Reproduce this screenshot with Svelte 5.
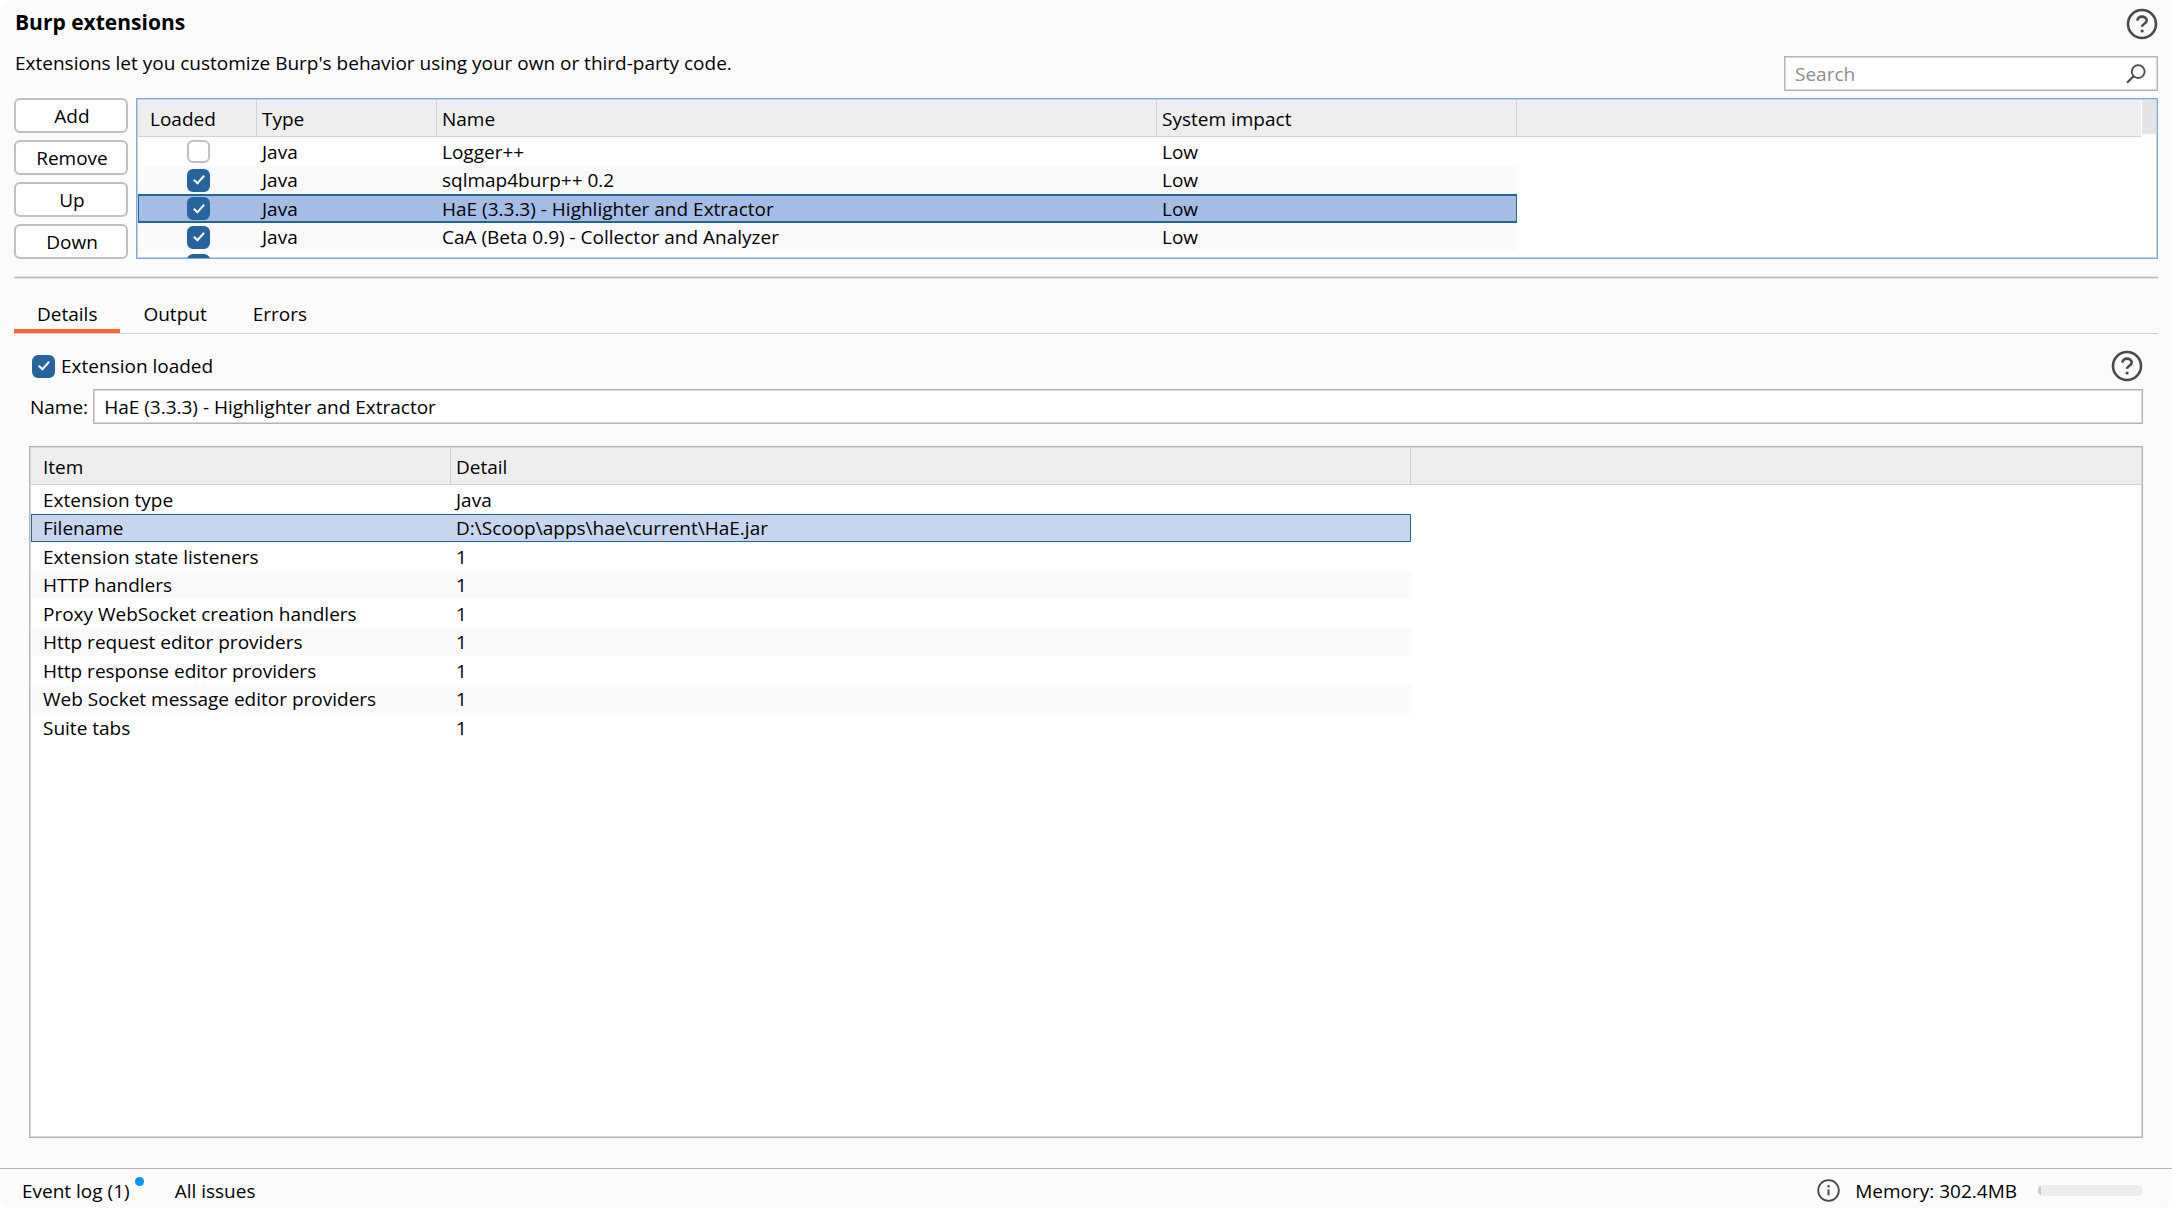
<script lang="ts">
	type Extension = { loaded: boolean; type: string; name: string; impact: string };

	let extensions = $state<Extension[]>([
		{ loaded: false, type: 'Java', name: 'Logger++', impact: 'Low' },
		{ loaded: true, type: 'Java', name: 'sqlmap4burp++ 0.2', impact: 'Low' },
		{ loaded: true, type: 'Java', name: 'HaE (3.3.3) - Highlighter and Extractor', impact: 'Low' },
		{ loaded: true, type: 'Java', name: 'CaA (Beta 0.9) - Collector and Analyzer', impact: 'Low' },
		{ loaded: true, type: '', name: '', impact: '' }
	]);

	const details = [
		{ item: 'Extension type', detail: 'Java' },
		{ item: 'Filename', detail: 'D:\\Scoop\\apps\\hae\\current\\HaE.jar' },
		{ item: 'Extension state listeners', detail: '1' },
		{ item: 'HTTP handlers', detail: '1' },
		{ item: 'Proxy WebSocket creation handlers', detail: '1' },
		{ item: 'Http request editor providers', detail: '1' },
		{ item: 'Http response editor providers', detail: '1' },
		{ item: 'Web Socket message editor providers', detail: '1' },
		{ item: 'Suite tabs', detail: '1' }
	];

	const actions = ['Add', 'Remove', 'Up', 'Down'];
	const tabs = ['Details', 'Output', 'Errors'];

	let selected = $state(2);
	let selectedDetail = $state(1);
	let activeTab = $state('Details');
	let search = $state('');
	const memoryUsed = 3;
</script>

{#snippet helpIcon()}
	<svg width="32" height="32" viewBox="0 0 32 32" fill="none" stroke="#4a4a4a">
		<circle cx="16" cy="16" r="14" stroke-width="2.6" />
		<path d="M11.4 12.6c.1-2.3 2-4 4.6-4s4.7 1.6 4.7 3.9c0 3.2-4.6 3.2-4.6 6.3" stroke-width="2.6" />
		<circle cx="16.1" cy="23" r="1.6" fill="#4a4a4a" stroke="none" />
	</svg>
{/snippet}

<div class="window">
	<main>
		<header class="page-header">
			<div class="intro">
				<h1>Burp extensions</h1>
				<p>Extensions let you customize Burp's behavior using your own or third-party code.</p>
			</div>
			<div class="header-tools">
				<button class="icon-btn" aria-label="Help">{@render helpIcon()}</button>
				<label class="search field">
					<input type="text" placeholder="Search" aria-label="Search" bind:value={search} />
					<svg width="22" height="22" viewBox="0 0 22 22" fill="none" stroke="#4a4a4a" stroke-width="1.8">
						<circle cx="13.2" cy="8.6" r="6.4" />
						<path d="M8.6 13.2L2 19.8" stroke-width="2.2" />
					</svg>
				</label>
			</div>
		</header>

		<section class="extensions">
			<div class="actions">
				{#each actions as action (action)}
					<button class="btn">{action}</button>
				{/each}
			</div>
			<div class="pane focused">
				<table>
					<colgroup>
						<col class="col-loaded" />
						<col class="col-type" />
						<col class="col-name" />
						<col class="col-impact" />
						<col />
					</colgroup>
					<thead>
						<tr>
							<th>Loaded</th>
							<th>Type</th>
							<th>Name</th>
							<th>System impact</th>
							<th></th>
						</tr>
					</thead>
					<tbody>
						{#each extensions as ext, i (i)}
							<tr class:selected={i === selected} onclick={() => (selected = i)}>
								<td class="check">
									<input type="checkbox" aria-label="Loaded" bind:checked={ext.loaded} />
								</td>
								<td>{ext.type}</td>
								<td>{ext.name}</td>
								<td>{ext.impact}</td>
								<td></td>
							</tr>
						{/each}
					</tbody>
				</table>
				<div class="scrollbar"><div class="thumb"></div></div>
			</div>
		</section>

		<hr />

		<div class="tabs" role="tablist">
			{#each tabs as tab (tab)}
				<button
					class="tab"
					class:active={tab === activeTab}
					role="tab"
					aria-selected={tab === activeTab}
					onclick={() => (activeTab = tab)}
				>{tab}</button>
			{/each}
		</div>

		<section class="panel">
			<div class="loaded-row">
				<label class="loaded">
					<input type="checkbox" checked />
					Extension loaded
				</label>
				<button class="icon-btn" aria-label="Help">{@render helpIcon()}</button>
			</div>
			<div class="name-row">
				<label for="ext-name">Name:</label>
				<div class="field">
					<input id="ext-name" type="text" value="HaE (3.3.3) - Highlighter and Extractor" />
				</div>
			</div>
			<div class="pane details">
				<table>
					<colgroup>
						<col class="col-item" />
						<col class="col-detail" />
						<col />
					</colgroup>
					<thead>
						<tr>
							<th>Item</th>
							<th>Detail</th>
							<th></th>
						</tr>
					</thead>
					<tbody>
						{#each details as row, i (row.item)}
							<tr class:selected={i === selectedDetail} onclick={() => (selectedDetail = i)}>
								<td>{row.item}</td>
								<td>{row.detail}</td>
								<td></td>
							</tr>
						{/each}
					</tbody>
				</table>
			</div>
		</section>
	</main>

	<footer>
		<button class="status-btn event-log">Event log (1)<span class="dot"></span></button>
		<button class="status-btn">All issues</button>
		<div class="memory">
			<svg width="23" height="23" viewBox="0 0 23 23" fill="none" stroke="#4a4a4a">
				<circle cx="11.5" cy="11.5" r="10.3" stroke-width="1.8" />
				<path d="M11.5 10.4v6" stroke-width="2" />
				<circle cx="11.5" cy="7.3" r="1.2" fill="#4a4a4a" stroke="none" />
			</svg>
			<span>Memory: 302.4MB</span>
			<div class="meter"><div class="used" style="width: {memoryUsed}%"></div></div>
		</div>
	</footer>
</div>

<style>
	:global(body) {
		background: #fff;
	}

	.window {
		min-height: 100vh;
		box-sizing: border-box;
		display: flex;
		flex-direction: column;
		background: #fbfbfb;
		border-radius: 12px;
		color: #000;
		font-family: 'Open Sans', 'Noto Sans', sans-serif;
		font-size: 19px;
		line-height: 28px;
	}

	main {
		flex: 1;
		display: flex;
		flex-direction: column;
		padding: 8px 14px 0 14px;
	}

	button,
	input {
		font: inherit;
		color: inherit;
		margin: 0;
	}

	svg {
		display: block;
		flex-shrink: 0;
	}

	.page-header {
		display: flex;
		justify-content: space-between;
		margin-bottom: 7px;
		padding-left: 1px;
	}

	h1 {
		margin: 0 0 13px;
		font-size: 21px;
		font-weight: 700;
	}

	p {
		margin: 0;
	}

	.header-tools {
		display: flex;
		flex-direction: column;
		align-items: flex-end;
		gap: 16px;
	}

	.icon-btn {
		padding: 0;
		border: none;
		background: none;
		cursor: pointer;
	}

	.field {
		display: flex;
		align-items: center;
		box-sizing: border-box;
		height: 35px;
		border: 1px solid #b9b2b5;
		box-shadow: inset 0 0 0 1px #dcd8da;
		background: #fff;
	}

	.field input {
		flex: 1;
		min-width: 0;
		padding: 0 10px;
		border: none;
		outline: none;
		background: none;
	}

	.search {
		width: 374px;
		padding-right: 10px;
	}

	.search input::placeholder {
		color: #8c8c8c;
		opacity: 1;
	}

	.extensions {
		display: flex;
		gap: 8px;
	}

	.actions {
		display: flex;
		flex-direction: column;
		gap: 7px;
		width: 114px;
	}

	.btn {
		height: 35px;
		padding: 0 0 0 2px;
		border: 2px solid #c3bec0;
		border-radius: 6px;
		background: #fff;
		cursor: pointer;
	}

	.pane {
		flex: 1;
		display: flex;
		align-items: flex-start;
		box-sizing: border-box;
		border: 1px solid #b9b2b5;
		box-shadow: inset 0 0 0 1px #dcd8da;
		padding: 1px;
		background: #fff;
		overflow: hidden;
	}

	.pane.focused {
		height: 161px;
		border-color: #7faadf;
		box-shadow: inset 0 0 0 1px #bcd2ee;
	}

	table {
		flex: 1;
		width: 100%;
		table-layout: fixed;
		border-collapse: separate;
		border-spacing: 0;
	}

	.col-loaded {
		width: 119px;
	}

	.col-type {
		width: 180px;
	}

	.col-name {
		width: 720px;
	}

	.col-impact {
		width: 360px;
	}

	.col-item {
		width: 420px;
	}

	.col-detail {
		width: 960px;
	}

	th {
		height: 34px;
		padding: 2px 5px 0;
		background: #eee;
		border-right: 1px solid #d2d2d2;
		border-bottom: 1px solid #d2d2d2;
		font-weight: 400;
		text-align: left;
	}

	th:first-child,
	td:first-child {
		padding-left: 12px;
	}

	th:last-child {
		border-right: none;
	}

	td {
		height: 29px;
		padding: 0 5px;
		line-height: 20px;
		white-space: nowrap;
	}

	tbody tr:nth-child(even) td {
		height: 28px;
	}

	tbody tr:nth-child(even) td:not(:last-child) {
		background: #fafafa;
	}

	td.check {
		padding: 0 0 0 2px;
		text-align: center;
	}

	td.check input {
		margin: 0 auto;
	}

	tbody tr.selected td:not(:last-child) {
		background: #c6d6ec;
		box-shadow: inset 0 1px #26649e, inset 0 -1px #26649e;
	}

	tbody tr.selected td:first-child {
		box-shadow: inset 0 1px #26649e, inset 0 -1px #26649e, inset 1px 0 #26649e;
	}

	tbody tr.selected td:nth-last-child(2) {
		box-shadow: inset 0 1px #26649e, inset 0 -1px #26649e, inset -1px 0 #26649e;
	}

	.focused tbody tr.selected td:not(:last-child) {
		background: #a3bde4;
		border-top: 1px solid #26649e;
		border-bottom: 1px solid #26649e;
		height: 27px;
	}

	.scrollbar {
		flex: 0 0 15px;
		background: #fff;
	}

	.thumb {
		height: 34px;
		margin-left: 1px;
		background: #e4e4e4;
	}

	input[type='checkbox'] {
		appearance: none;
		display: grid;
		place-items: center;
		box-sizing: border-box;
		width: 23px;
		height: 23px;
		border: 2px solid #c3bec0;
		border-radius: 6px;
		background: #fff;
	}

	input[type='checkbox']:checked {
		border-color: #26649e;
		background: #26649e;
	}

	input[type='checkbox']:checked::before {
		content: '';
		width: 4px;
		height: 9px;
		margin-bottom: 3px;
		border: solid #fff;
		border-width: 0 2px 2px 0;
		transform: rotate(42deg);
	}

	hr {
		width: 100%;
		height: 1px;
		margin: 17px 0 14px;
		border: solid #e6e6e6;
		border-width: 1px 0;
		background: #b9b9b9;
		box-sizing: content-box;
	}

	.tabs {
		display: flex;
		border-bottom: 1px solid #cfd4d3;
	}

	.tab {
		height: 40px;
		padding: 5px 23px 0;
		border: none;
		border-bottom: 4px solid transparent;
		background: none;
		cursor: pointer;
	}

	.tab.active {
		border-bottom-color: #ff6633;
	}

	.panel {
		flex: 1;
		display: flex;
		flex-direction: column;
		padding: 16px 15px 30px 15px;
	}

	.loaded-row {
		display: flex;
		justify-content: space-between;
		align-items: center;
		margin-bottom: 7px;
	}

	.loaded {
		display: flex;
		align-items: center;
		gap: 6px;
		padding-left: 3px;
	}

	.name-row {
		display: flex;
		align-items: center;
		gap: 5px;
		margin-bottom: 22px;
		padding-left: 1px;
	}

	.name-row .field {
		flex: 1;
	}

	footer {
		display: flex;
		align-items: center;
		gap: 45px;
		box-sizing: border-box;
		height: 41px;
		padding: 3px 29px 0 22px;
		border-top: 1px solid #b9b2b5;
	}

	.status-btn {
		position: relative;
		padding: 0;
		border: none;
		background: none;
		cursor: pointer;
	}

	.dot {
		position: absolute;
		top: 0;
		right: -14px;
		width: 9px;
		height: 9px;
		border-radius: 50%;
		background: #0a94ff;
	}

	.memory {
		display: flex;
		align-items: center;
		gap: 15px;
		margin-left: auto;
	}

	.meter {
		width: 105px;
		height: 11px;
		margin-left: 6px;
		border-radius: 6px;
		background: #ececec;
		overflow: hidden;
	}

	.used {
		height: 100%;
		background: #c8c8c8;
	}
</style>
